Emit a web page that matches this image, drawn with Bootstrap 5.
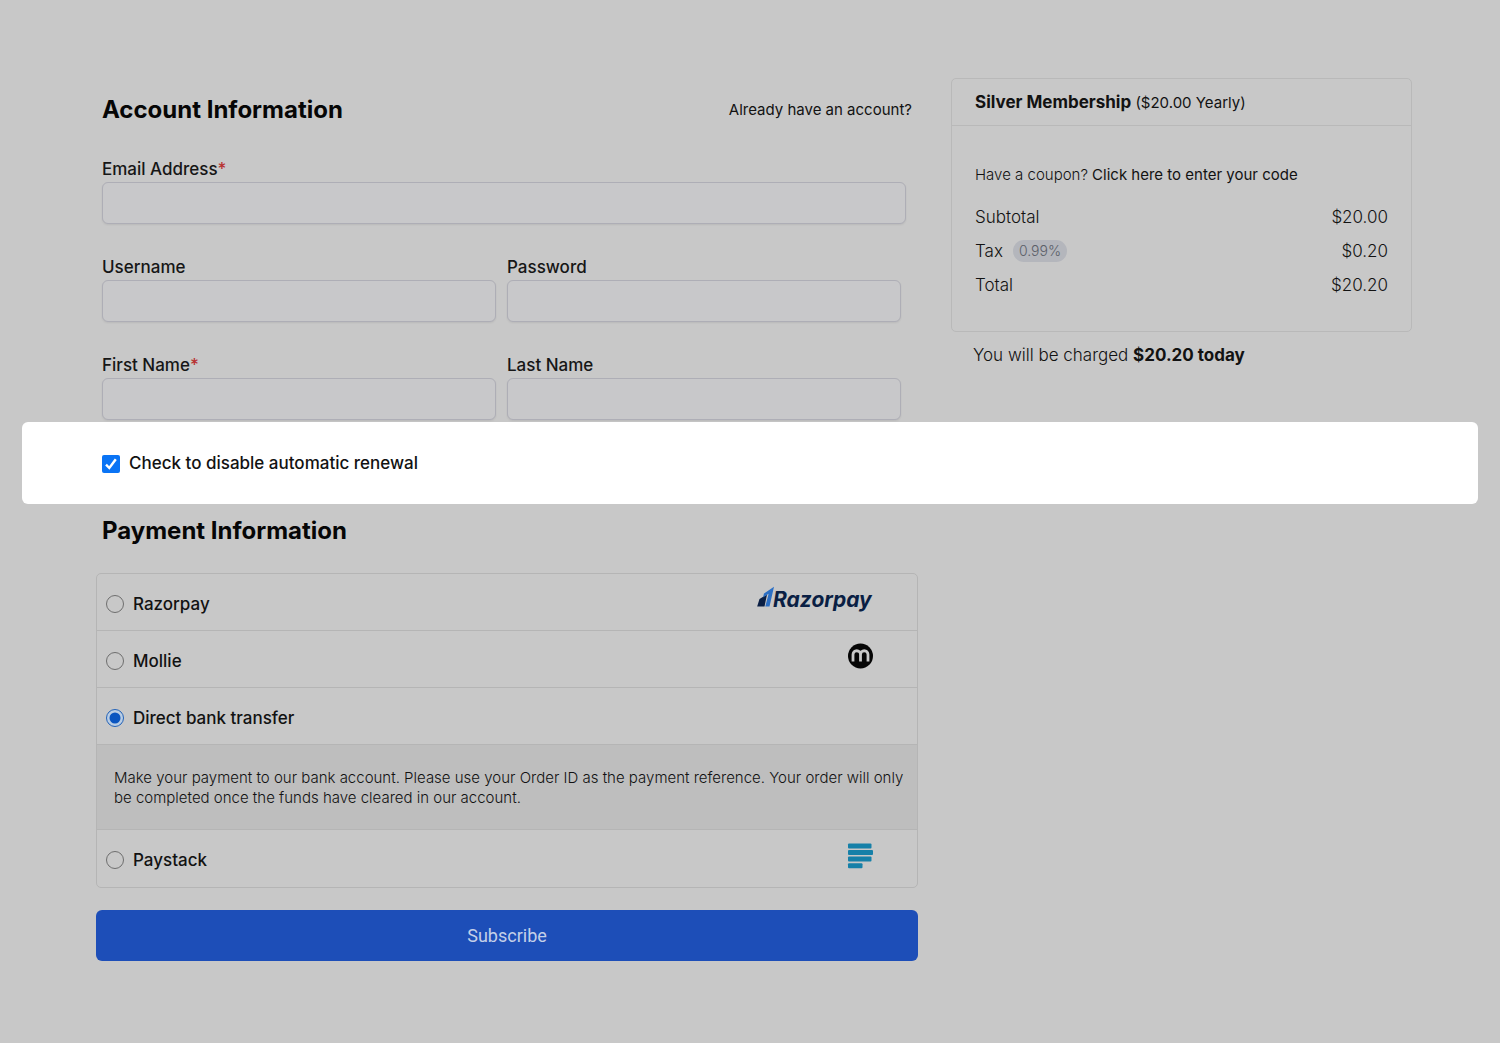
<!DOCTYPE html>
<html lang="en">
<head>
<meta charset="utf-8">
<meta name="viewport" content="width=device-width, initial-scale=1">
<title>Register - Silver Membership</title>
<link href="https://cdn.jsdelivr.net/npm/bootstrap@5.3.0/dist/css/bootstrap.min.css" rel="stylesheet">
<style>
  body { background: #c8c8c8; color: #121212; font-family: Inter, "Open Sans", sans-serif; font-size: 17px; line-height: 24px; }
  .checkout { padding: 78px 0; }
  .checkout-grid { display: grid; grid-template-columns: minmax(0, 1fr); gap: 33px; padding: 0 24px; }
  @media (min-width: 992px) {
    .checkout-grid { grid-template-columns: minmax(0, 1fr) 461px; padding: 0 88px 0 96px; }
  }
  .section-title { font-size: 24px; line-height: 32px; font-weight: 700; color: #060606; margin: 0; }
  .account { padding: 16px 6px 2px; }
  .account-head { margin-bottom: 30px; }
  .login-link { font-size: 15px; font-weight: 400; color: #121212; text-decoration: none; }
  .fields { display: grid; gap: 30px; }
  .field-wide { margin-right: 6px; }
  .field-pair { display: grid; grid-template-columns: 1fr 1fr; gap: 11px; margin-right: 11px; }
  .field-label { display: block; line-height: 26px; font-weight: 500; color: #161616; }
  .req { color: #b83232; }
  .form-control.field-input { height: 42px; background: #c8c8ca; border: 1px solid #aeaeb6; border-radius: 6px; box-shadow: 0 1px 2px rgba(0,0,0,.07); }
  .summary { border: 1px solid #b9b9b9; border-radius: 5px; }
  .summary-head { padding: 11px 23px 10px; border-bottom: 1px solid #b9b9b9; font-size: 15px; }
  .plan-name { font-size: 17px; font-weight: 700; }
  .summary-body { padding: 37px 23px 29px; font-weight: 300; }
  .coupon { font-size: 15px; margin-bottom: 13px; }
  .coupon a { color: #121212; font-weight: 400; text-decoration: none; }
  .sum-row { min-height: 34px; font-size: 17px; }
  .rate { background: #b4b6bc; color: #5b5f69; font-size: 14px; line-height: 22px; padding: 0 6px; margin-left: 10px; font-weight: 300; }
  .charged { margin: 11px 22px 0; font-weight: 300; }
  .charged strong { font-weight: 700; }
  .renewal { background: #fff; border-radius: 6px; margin: 0 22px; padding: 29px 80px; min-height: 82px; }
  .form-check-input.tick { width: 18px; height: 18px; margin: 1px 9px 0 0; border: 0; border-radius: 2px; }
  .form-check-input.tick:checked { background-color: #0a74f5; background-size: 18px; background-image: url("data:image/svg+xml,%3Csvg xmlns='http://www.w3.org/2000/svg' viewBox='0 0 18 18'%3E%3Cpath d='M4 9.700 7.300 13 13.800 4.200' fill='none' stroke='%23fff' stroke-width='2.400'/%3E%3C/svg%3E"); }
  .renewal label { font-weight: 500; }
  .payment { padding-top: 11px; }
  .payment .section-title { margin: 0 6px 26px; }
  .gateways { border: 1px solid #b5b5b5; border-radius: 5px; overflow: hidden; }
  .gateway { height: 57px; border-bottom: 1px solid #b5b5b5; padding: 3px 44px 0 9px; }
  .gateway:last-child { border-bottom: 0; }
  .gateway label { font-weight: 500; }
  .gateway svg { margin-bottom: 9px; }
  .form-check-input.dot { width: 18px; height: 18px; margin: 0 9px 0 0; background-color: transparent; border: 1px solid #6e6e6e; }
  .form-check-input.dot:checked { border-color: #2463b8; background-color: #b9cde4; background-size: 18px; background-image: url("data:image/svg+xml,%3Csvg xmlns='http://www.w3.org/2000/svg' viewBox='0 0 18 18'%3E%3Ccircle cx='9' cy='9' r='5.5' fill='%230a55c0'/%3E%3C/svg%3E"); }
  .gateway-note { background: #bebebe; border-bottom: 1px solid #b5b5b5; padding: 23px 10px 21px 17px; font-size: 15px; line-height: 20px; font-weight: 300; }
  .btn.subscribe { margin-top: 22px; height: 51px; background: #1d4eb8; color: #c4d0e8; border: 0; border-radius: 6px; font-family: Roboto, sans-serif; font-size: 18px; }
</style>
</head>
<body>
<form class="checkout">
  <div class="checkout-grid">
    <section class="account">
      <div class="account-head d-flex justify-content-between align-items-center">
        <h2 class="section-title">Account Information</h2>
        <a class="login-link" href="#">Already have an account?</a>
      </div>
      <div class="fields">
        <div class="field-wide">
          <label class="field-label" for="email">Email Address<span class="req">*</span></label>
          <input class="form-control field-input" type="email" id="email">
        </div>
        <div class="field-pair">
          <div>
            <label class="field-label" for="user">Username</label>
            <input class="form-control field-input" type="text" id="user">
          </div>
          <div>
            <label class="field-label" for="pass">Password</label>
            <input class="form-control field-input" type="password" id="pass">
          </div>
        </div>
        <div class="field-pair">
          <div>
            <label class="field-label" for="first">First Name<span class="req">*</span></label>
            <input class="form-control field-input" type="text" id="first">
          </div>
          <div>
            <label class="field-label" for="last">Last Name</label>
            <input class="form-control field-input" type="text" id="last">
          </div>
        </div>
      </div>
    </section>

    <aside>
      <div class="summary">
        <div class="summary-head"><span class="plan-name">Silver Membership</span> ($20.00 Yearly)</div>
        <div class="summary-body">
          <p class="coupon">Have a coupon? <a href="#">Click here to enter your code</a></p>
          <div class="sum-row d-flex justify-content-between align-items-center"><span>Subtotal</span><span>$20.00</span></div>
          <div class="sum-row d-flex justify-content-between align-items-center"><span class="d-flex align-items-center">Tax <span class="rate rounded-pill">0.99%</span></span><span>$0.20</span></div>
          <div class="sum-row d-flex justify-content-between align-items-center"><span>Total</span><span>$20.20</span></div>
        </div>
      </div>
      <p class="charged">You will be charged <strong>$20.20 today</strong></p>
    </aside>
  </div>

  <div class="renewal d-flex align-items-center">
    <input class="form-check-input tick" type="checkbox" id="renew" checked>
    <label for="renew">Check to disable automatic renewal</label>
  </div>

  <div class="checkout-grid">
    <section class="payment">
      <h2 class="section-title">Payment Information</h2>
      <div class="gateways">
        <div class="gateway d-flex align-items-center">
          <input class="form-check-input dot" type="radio" name="gateway" id="g-razor">
          <label for="g-razor">Razorpay</label>
          <svg class="ms-auto" width="117" height="28" viewBox="0 0 117 28" role="img" aria-label="Razorpay">
            <path d="M3.500 14 11 9.500 8.500 21.500H1.200Z" fill="#0a1f44"/>
            <path d="M8 8.500 18 1.800 13.500 21.500H9.300L12.600 8.800 7 12.500Z" fill="#2c6fc4"/>
            <text x="17" y="22" font-family="Inter, sans-serif" font-size="21" font-weight="700" font-style="italic" fill="#0a1f44">Razorpay</text>
          </svg>
        </div>
        <div class="gateway d-flex align-items-center">
          <input class="form-check-input dot" type="radio" name="gateway" id="g-mollie">
          <label for="g-mollie">Mollie</label>
          <svg class="ms-auto" width="26" height="26" viewBox="0 0 26 26" role="img" aria-label="Mollie">
            <circle cx="13.500" cy="13" r="12.500" fill="#060606"/>
            <path d="M6 18.500V11.500a3.700 3.700 0 0 1 7.500 0V18.500M13.500 11.500a3.700 3.700 0 0 1 7.500 0V18.500" fill="none" stroke="#c8c8c8" stroke-width="2.800"/>
          </svg>
        </div>
        <div class="gateway d-flex align-items-center">
          <input class="form-check-input dot" type="radio" name="gateway" id="g-bank" checked>
          <label for="g-bank">Direct bank transfer</label>
        </div>
        <div class="gateway-note">Make your payment to our bank account. Please use your Order ID as the payment reference. Your order will only be completed once the funds have cleared in our account.</div>
        <div class="gateway d-flex align-items-center">
          <input class="form-check-input dot" type="radio" name="gateway" id="g-stack">
          <label for="g-stack">Paystack</label>
          <svg class="ms-auto" width="26" height="26" viewBox="0 0 26 26" fill="#1680a8" role="img" aria-label="Paystack">
            <rect x="1" y="0.500" width="23.500" height="5" rx="1"/>
            <rect x="1" y="7" width="25" height="5" rx="1"/>
            <rect x="1" y="13.500" width="23.500" height="5" rx="1"/>
            <rect x="1" y="20.200" width="14.500" height="5" rx="1"/>
          </svg>
        </div>
      </div>
      <button class="btn subscribe w-100" type="submit">Subscribe</button>
    </section>
  </div>
</form>
<script src="https://cdn.jsdelivr.net/npm/bootstrap@5.3.0/dist/js/bootstrap.bundle.min.js"></script>
</body>
</html>
